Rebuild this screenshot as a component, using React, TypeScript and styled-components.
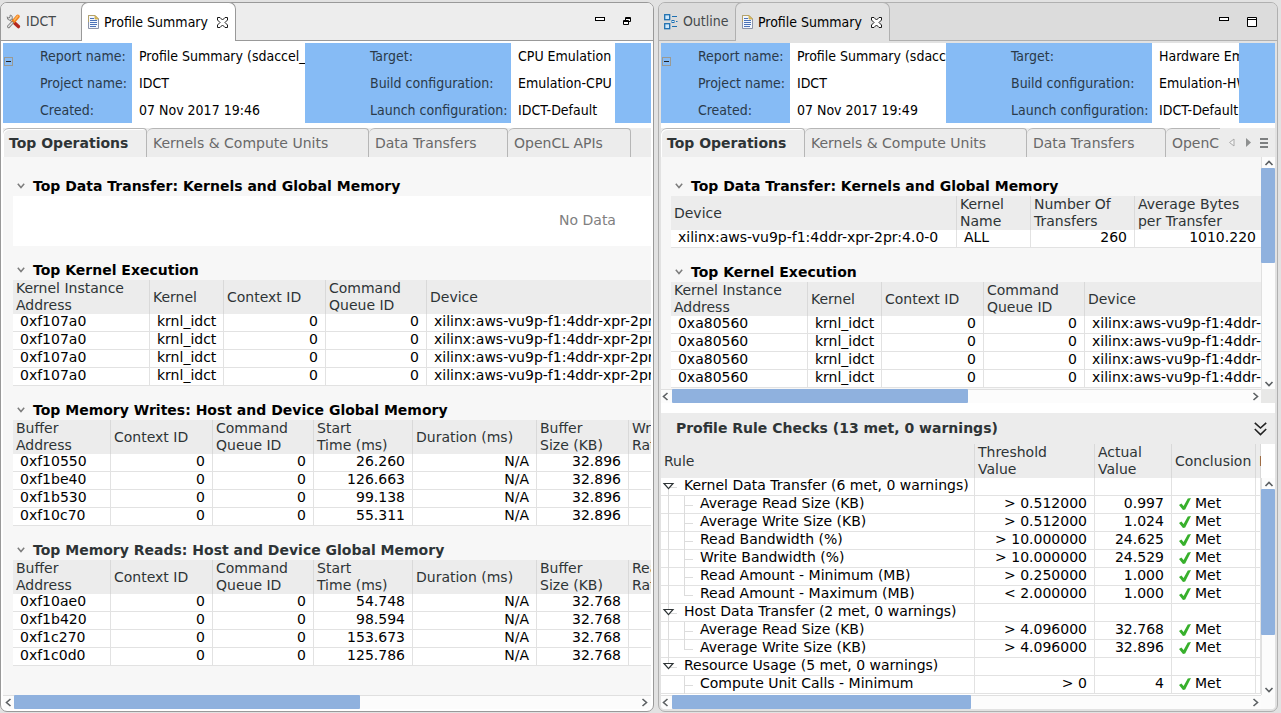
import React from "react";
import styled, { createGlobalStyle, css } from "styled-components";

const GlobalStyle = createGlobalStyle`
  *, *::before, *::after { box-sizing: border-box; }
  body {
    margin: 0;
    background: #e2e2e2;
    color: #000;
    font: 14px/17px "DejaVu Sans", sans-serif;
  }
  button {
    margin: 0;
    padding: 0;
    border: 0;
    background: none;
    color: inherit;
    font: inherit;
    cursor: default;
  }
  h2, dl, dd, dt { margin: 0; font: inherit; }
  svg { display: block; flex: none; }
`;

const uiFont = css`
  font-family: "DejaVu Sans Condensed", "Noto Sans", sans-serif;
`;

/* ---------- frame ---------- */

const Workbench = styled.main`
  display: flex;
  gap: 4px;
  height: 100vh;
  min-height: 560px;
  padding: 2px 3px 1px 0;
`;

const Pane = styled.section<{ $grow: number; $focused?: boolean }>`
  --edge: ${(p) => (p.$focused ? "#999999" : "#b0b0b0")};
  --strip: ${(p) => (p.$focused ? "#ededed" : "#dcdcdc")};
  --body: ${(p) => (p.$focused ? "#ffffff" : "#e2e2e2")};
  flex: ${(p) => p.$grow} 1 0;
  min-width: 0;
  display: flex;
  flex-direction: column;
  border: 1px solid var(--edge);
  border-radius: 7px;
  background: var(--body);
`;

const Strip = styled.header`
  ${uiFont}
  display: flex;
  flex: none;
  height: 38px;
  border-bottom: 1px solid var(--edge);
  border-radius: 6px 6px 0 0;
  background: var(--strip);
`;

const ViewTab = styled.div<{ $active?: boolean; $width: number }>`
  display: flex;
  align-items: center;
  gap: 5px;
  width: ${(p) => p.$width}px;
  padding-left: 5px;
  color: #45494b;
  white-space: nowrap;
  ${(p) =>
    p.$active &&
    css`
      margin: -1px 0;
      padding-left: 6px;
      border: 1px solid var(--edge);
      border-bottom: 0;
      border-radius: 7px 7px 0 0;
      background: var(--body);
      color: #000;
    `}
`;

const CloseTab = styled.button`
  margin: 0 7px 0 auto;
`;

const StripTools = styled.div`
  display: flex;
  gap: 18px;
  margin-left: auto;
  padding: 13px 20px 0 0;
  align-items: flex-start;
`;

const PaneBody = styled.div`
  flex: 1;
  min-height: 0;
  display: flex;
  flex-direction: column;
  margin: 2px;
  overflow: hidden;
  background: #fff;
  border-radius: 0 0 4px 4px;
`;

/* ---------- report details ---------- */

const InfoBar = styled.dl`
  ${uiFont}
  display: flex;
  flex: none;
  height: 80px;
  margin-bottom: 5px;
  line-height: 27px;
  white-space: nowrap;
  overflow: hidden;
`;

const InfoLabels = styled.dt<{ $width: number; $indent: number }>`
  display: flex;
  flex: none;
  width: ${(p) => p.$width}px;
  padding-left: ${(p) => p.$indent}px;
  background: #86bbf5;
  color: #2a3a4a;
`;

const InfoValues = styled.dd<{ $basis: number }>`
  flex: 1 1 ${(p) => p.$basis}px;
  min-width: 0;
  padding-left: 7px;
  overflow: hidden;
`;

const InfoTail = styled.dd`
  flex: none;
  width: 36px;
  background: #86bbf5;
`;

const Collapse = styled.button`
  align-self: flex-start;
  flex: none;
  width: 9px;
  height: 9px;
  margin: 14px 27px 0 0;
  border: 1px solid #9a9a94;
  display: grid;
  place-items: center;
  &::before { content: ""; width: 5px; height: 1px; background: #222; }
`;

/* ---------- page tabs ---------- */

const PageTabs = styled.nav`
  display: flex;
  flex: none;
  height: 29px;
  background: #ececec;
`;

const TabRun = styled.div`
  display: flex;
  flex: 1;
  min-width: 0;
  overflow: hidden;
`;

const PageTab = styled.button<{ $width: number; $active?: boolean }>`
  flex: none;
  width: ${(p) => p.$width}px;
  padding-left: 6px;
  border: solid #b6b6b6;
  border-width: 1px 1px 0 0;
  border-radius: 6px 4px 0 0;
  text-align: left;
  white-space: nowrap;
  color: #696969;
  ${(p) => p.$active && css`color: #2e3436; font-weight: 700; background: #eeeeee; box-shadow: inset 1px 1px 0 #fff;`}
`;

const TabControls = styled.div`
  display: flex;
  flex: none;
  align-items: center;
  gap: 7px;
  width: 55px;
  padding-left: 8px;
`;

/* ---------- sections and tables ---------- */

const Report = styled.div`
  flex: 1;
  min-width: 0;
  padding: 19px 0 1px 10px;
  overflow: hidden;
  background: #f7f7f7;
`;

const Block = styled.section`
  width: 1149px;
  & + & { margin-top: 14px; }
`;

const BlockTitle = styled.h2<{ $soft?: boolean }>`
  display: flex;
  align-items: center;
  gap: 8px;
  padding-left: 4px;
  line-height: 20px;
  font-weight: 700;
  color: ${(p) => (p.$soft ? "#2e3436" : "#000")};
`;

const Empty = styled.div`
  height: 50px;
  line-height: 48px;
  background: #fff;
  text-align: center;
  color: #808080;
`;

const Grid = styled.table`
  width: 100%;
  table-layout: fixed;
  border-collapse: separate;
  border-spacing: 0;
  background: #fff;
`;

const Th = styled.th`
  height: 34px;
  padding: 0 0 0 3px;
  border-right: 1px solid #d9d9d9;
  background: #ececec;
  color: #2e3436;
  font-weight: 400;
  text-align: left;
  white-space: pre;
`;

const Td = styled.td<{ $num?: boolean; $flush?: boolean }>`
  height: 18px;
  padding: ${(p) => (p.$flush ? "0" : "0 7px 2px")};
  border: solid #e2e2e2;
  border-width: 0 1px 1px 0;
  line-height: 15px;
  text-align: ${(p) => (p.$num ? "right" : "left")};
  white-space: nowrap;
`;

interface Column { title: string; width?: number; num?: boolean }

function DataTable({ columns, rows }: { columns: Column[]; rows: string[][] }) {
  return (
    <Grid>
      <colgroup>{columns.map((c) => <col key={c.title} width={c.width} />)}</colgroup>
      <thead>
        <tr>{columns.map((c) => <Th key={c.title} scope="col">{c.title}</Th>)}</tr>
      </thead>
      <tbody>
        {rows.map((r, i) => (
          <tr key={i}>
            {columns.map((c, j) => <Td key={c.title} $num={c.num}>{r[j]}</Td>)}
          </tr>
        ))}
      </tbody>
    </Grid>
  );
}

/* ---------- scrollbars ---------- */

const Bar = styled.div<{ $vertical?: boolean }>`
  display: flex;
  flex: ${(p) => (p.$vertical ? "none" : "1")};
  flex-direction: ${(p) => (p.$vertical ? "column" : "row")};
  ${(p) => (p.$vertical ? "width: 14px; border-left: 1px solid #e0e0e0;" : "height: 14px; border-top: 1px solid #e0e0e0;")}
  background: #fcfcfc;
`;

const Arrow = styled.button<{ $vertical?: boolean }>`
  display: grid;
  place-items: center;
  flex: none;
  ${(p) => (p.$vertical ? "height: 11px;" : "width: 11px;")}
`;

const Track = styled.div<{ $vertical?: boolean }>`
  flex: 1;
  ${(p) => (p.$vertical ? "margin-left: -1px;" : "margin-top: -1px;")}
`;

const Thumb = styled.div<{ $vertical?: boolean; $part: number }>`
  background: #8fb1de;
  border-radius: 1px;
  width: ${(p) => (p.$vertical ? "100%" : p.$part + "%")};
  height: ${(p) => (p.$vertical ? p.$part + "%" : "100%")};
`;

const BarRow = styled.div`
  display: flex;
  flex: none;
  height: 14px;
`;

const Corner = styled.div<{ $shade: string }>`
  flex: none;
  width: 14px;
  background: ${(p) => p.$shade};
`;

const chevrons = {
  up: "M1.5 7L5 3.5L8.5 7",
  down: "M1.5 3L5 6.5L8.5 3",
  left: "M6.5 1L2.5 4.5L6.5 8",
  right: "M2.5 1L6.5 4.5L2.5 8",
};

function Chevron({ to }: { to: keyof typeof chevrons }) {
  return (
    <svg width="10" height="10" viewBox="0 0 10 10" fill="none" stroke="#5c6063" strokeWidth="1.6">
      <path d={chevrons[to]} />
    </svg>
  );
}

function ScrollBar({ vertical, part }: { vertical?: boolean; part: number }) {
  return (
    <Bar $vertical={vertical}>
      <Arrow $vertical={vertical} aria-label={vertical ? "Scroll up" : "Scroll left"}>
        <Chevron to={vertical ? "up" : "left"} />
      </Arrow>
      <Track $vertical={vertical}><Thumb $vertical={vertical} $part={part} /></Track>
      <Arrow $vertical={vertical} aria-label={vertical ? "Scroll down" : "Scroll right"}>
        <Chevron to={vertical ? "down" : "right"} />
      </Arrow>
    </Bar>
  );
}

/* ---------- icons ---------- */

const ToolsIcon = () => (
  <svg width="15" height="15" viewBox="0 0 15 15" fill="none" strokeLinecap="round">
    <path d="M4 4.4L8 8.4" stroke="#6d6d6d" strokeWidth="3.2" />
    <path d="M4 4.4L8 8.4" stroke="#e8e8e8" strokeWidth="1.4" />
    <path d="M1.2 3.2A2.6 2.6 0 1 0 4.2 1L4 3.2L2.8 4Z" fill="#e4e4e4" stroke="#7a7a7a" strokeWidth="0.9" />
    <path d="M8.6 9L12.4 12.6" stroke="#b3261e" strokeWidth="3.4" />
    <path d="M11.8 2.4L7.4 7.6" stroke="#f07f1a" strokeWidth="3.8" />
    <path d="M11.8 2L8.4 6" stroke="#fcb45c" strokeWidth="1.6" />
    <path d="M6.2 8.8L2.6 12.6" stroke="#7a7a7a" strokeWidth="3" />
    <path d="M6.2 8.8L2.6 12.6" stroke="#e4e4e4" strokeWidth="1.4" />
  </svg>
);

const PageIcon = () => (
  <svg width="11" height="14" viewBox="0 0 11 14">
    <path d="M0.5 0.5H7L10.5 4V13.5H0.5Z" fill="#f3f7fd" stroke="#8c93a8" />
    <path d="M0.5 7V0.5H7" fill="none" stroke="#b5a26a" />
    <path d="M7 0.5V4H10.5Z" fill="#e6c65c" stroke="#c2a246" strokeWidth="0.8" />
    <path d="M2 3.5H6M2 5.5H9M2 7.5H9M2 9.5H9M2 11.5H8" stroke="#4b72b8" />
  </svg>
);

const OutlineIcon = () => (
  <svg width="14" height="16" viewBox="0 0 14 16" stroke="#1d6fb0">
    <rect x="0.7" y="0.7" width="5" height="5" fill="#cfe8fb" strokeWidth="1.3" />
    <rect x="0.7" y="9.7" width="5" height="5" fill="#cfe8fb" strokeWidth="1.3" />
    <rect x="8" y="6.5" width="2" height="2" fill="#cfe8fb" />
    <path d="M8 2.5H13M8 12.5H13M12 7.5H13.5" />
  </svg>
);

const CloseIcon = () => (
  <svg width="11" height="11" viewBox="0 0 11 11" fill="#fff" stroke="#1a1a1a">
    <path d="M0.5 0.5H3L5.5 3L8 0.5H10.5V3L8 5.5L10.5 8V10.5H8L5.5 8L3 10.5H0.5V8L3 5.5L0.5 3Z" />
  </svg>
);

const MinimizeIcon = () => (
  <svg width="10" height="11" viewBox="0 0 10 11">
    <rect x="0.5" y="1.5" width="9" height="3" fill="#fff" stroke="#000" />
  </svg>
);

const RestoreIcon = () => (
  <svg width="10" height="11" viewBox="0 0 10 11" fill="#fff" stroke="#000">
    <path d="M2.5 1.5H7.5V5.5H2.5Z M2 2.5H8" />
    <path d="M0.5 4.5H5.5V8.5H0.5Z M0 5.5H6" />
  </svg>
);

const MaximizeIcon = () => (
  <svg width="10" height="11" viewBox="0 0 10 11" fill="#fff" stroke="#000">
    <path d="M0.5 1.5H9.5V10.5H0.5Z M0 3.5H10" />
  </svg>
);

const Twistie = () => (
  <svg width="8" height="6" viewBox="0 0 8 6" fill="none" stroke="#7d7d7d" strokeWidth="1.5">
    <path d="M0.8 0.8L4 4.6L7.2 0.8" />
  </svg>
);

const DoubleChevron = () => (
  <svg width="13" height="14" viewBox="0 0 13 14" fill="none" stroke="#222" strokeWidth="1.6">
    <path d="M0.8 0.8L6.5 6L12.2 0.8M0.8 7L6.5 12.6L12.2 7" />
  </svg>
);

const MetIcon = () => (
  <svg width="12" height="12" viewBox="0 0 12 12">
    <path d="M0 7L2.4 5.4L4.6 8L8.8 0.6L12 0L6.2 11.4L4 12Z" fill="#38b02c" />
  </svg>
);

/* ---------- rule tree ---------- */

const NameCell = styled.div`
  display: flex;
  align-items: flex-start;
  gap: 3px;
  height: 17px;
`;

const MetCell = styled.div`
  display: flex;
  align-items: flex-start;
  gap: 4px;
  height: 17px;
  padding: 2px 0 0 7px;
  line-height: 11px;
`;

const RuleHead = styled.header`
  display: flex;
  flex: none;
  align-items: center;
  justify-content: space-between;
  height: 31px;
  padding: 0 8px 0 15px;
  background: #ececec;
  color: #2e3436;
`;

const RuleTitle = styled.h2`
  font-weight: 700;
`;

const Row = styled.div<{ $fill?: boolean }>`
  display: flex;
  flex: ${(p) => (p.$fill ? "1" : "none")};
  min-height: 0;
`;

const RuleTableBox = styled.div`
  flex: 1;
  min-width: 0;
  overflow: hidden;
`;

const RuleSide = styled.div`
  display: flex;
  flex: none;
  padding-top: 34px;
`;

const Gap = styled.div`
  flex: none;
  height: 10px;
`;

const Lower = styled.section`
  flex: 1;
  min-height: 0;
  display: flex;
  flex-direction: column;
`;

interface Rule { name: string; limit: string; actual: string }
interface RuleGroup { name: string; rules: Rule[] }

const guide = "#dcdcdc";

function GroupToggle({ first, last }: { first: boolean; last: boolean }) {
  return (
    <svg width="20" height="18" viewBox="0 0 20 18" fill="none">
      <path d={`M7.5 ${first ? 9 : 0}V${last ? 9 : 18}M8 9.5H16`} stroke={guide} />
      <path d="M3 5.5H12L7.5 10.6Z" fill="#fff" stroke="#2e3436" strokeWidth="1.2" />
    </svg>
  );
}

function Branch({ outer, last }: { outer: boolean; last: boolean }) {
  return (
    <svg width="36" height="18" viewBox="0 0 36 18" fill="none" stroke={guide}>
      {outer && <path d="M7.5 0V18" />}
      <path d={`M23.5 0V${last ? 10 : 18}M24 9.5H32`} />
    </svg>
  );
}

const ruleGroups: RuleGroup[] = [
  {
    name: "Kernel Data Transfer (6 met, 0 warnings)",
    rules: [
      { name: "Average Read Size (KB)", limit: "> 0.512000", actual: "0.997" },
      { name: "Average Write Size (KB)", limit: "> 0.512000", actual: "1.024" },
      { name: "Read Bandwidth (%)", limit: "> 10.000000", actual: "24.625" },
      { name: "Write Bandwidth (%)", limit: "> 10.000000", actual: "24.529" },
      { name: "Read Amount - Minimum (MB)", limit: "> 0.250000", actual: "1.000" },
      { name: "Read Amount - Maximum (MB)", limit: "< 2.000000", actual: "1.000" },
    ],
  },
  {
    name: "Host Data Transfer (2 met, 0 warnings)",
    rules: [
      { name: "Average Read Size (KB)", limit: "> 4.096000", actual: "32.768" },
      { name: "Average Write Size (KB)", limit: "> 4.096000", actual: "32.896" },
    ],
  },
  {
    name: "Resource Usage (5 met, 0 warnings)",
    rules: [{ name: "Compute Unit Calls - Minimum", limit: "> 0", actual: "4" }],
  },
];

function RuleTable() {
  return (
    <Grid>
      <colgroup>
        <col width={314} /><col width={120} /><col width={77} /><col width={84} /><col />
      </colgroup>
      <thead>
        <tr>
          {["Rule", "Threshold\nValue", "Actual\nValue", "Conclusion", "Details"].map((t) => (
            <Th key={t} scope="col">{t}</Th>
          ))}
        </tr>
      </thead>
      {ruleGroups.map((g, gi) => {
        const lastGroup = gi === ruleGroups.length - 1;
        return (
          <tbody key={g.name}>
            <tr>
              <Td $flush>
                <NameCell><GroupToggle first={gi === 0} last={lastGroup} />{g.name}</NameCell>
              </Td>
              <Td /><Td /><Td /><Td />
            </tr>
            {g.rules.map((r, ri) => (
              <tr key={r.name}>
                <Td $flush>
                  <NameCell>
                    <Branch outer={!lastGroup} last={!lastGroup && ri === g.rules.length - 1} />{r.name}
                  </NameCell>
                </Td>
                <Td $num>{r.limit}</Td>
                <Td $num>{r.actual}</Td>
                <Td $flush><MetCell><MetIcon />Met</MetCell></Td>
                <Td />
              </tr>
            ))}
          </tbody>
        );
      })}
    </Grid>
  );
}

/* ---------- report data ---------- */

const kernelColumns: Column[] = [
  { title: "Kernel Instance\nAddress", width: 137 },
  { title: "Kernel", width: 74 },
  { title: "Context ID", width: 102, num: true },
  { title: "Command\nQueue ID", width: 101, num: true },
  { title: "Device" },
];

const kernelRows = (address: string) =>
  Array.from({ length: 4 }, () => [address, "krnl_idct", "0", "0", "xilinx:aws-vu9p-f1:4ddr-xpr-2pr:4.0-0"]);

const bufferColumns = (rate: string): Column[] => [
  { title: "Buffer\nAddress", width: 98 },
  { title: "Context ID", width: 102, num: true },
  { title: "Command\nQueue ID", width: 101, num: true },
  { title: "Start\nTime (ms)", width: 99, num: true },
  { title: "Duration (ms)", width: 124, num: true },
  { title: "Buffer\nSize (KB)", width: 92, num: true },
  { title: rate, num: true },
];

const bufferRows = (entries: [string, string][], size: string) =>
  entries.map(([address, start]) => [address, "0", "0", start, "N/A", size, ""]);

const transferColumns: Column[] = [
  { title: "Device", width: 286 },
  { title: "Kernel\nName", width: 74 },
  { title: "Number Of\nTransfers", width: 104, num: true },
  { title: "Average Bytes\nper Transfer", width: 129, num: true },
  { title: "" },
];

function Title({ children, soft }: { children: string; soft?: boolean }) {
  return <BlockTitle $soft={soft}><Twistie />{children}</BlockTitle>;
}

function Info({ created, target, build }: { created: string; target: string; build: string }) {
  return (
    <InfoBar>
      <InfoLabels $width={129} $indent={1}>
        <Collapse aria-label="Collapse details" />
        <div><div>Report name:</div><div>Project name:</div><div>Created:</div></div>
      </InfoLabels>
      <InfoValues $basis={76}>
        <div>Profile Summary (sdaccel_</div><div>IDCT</div><div>{created}</div>
      </InfoValues>
      <InfoLabels $width={206} $indent={65}>
        <div><div>Target:</div><div>Build configuration:</div><div>Launch configuration:</div></div>
      </InfoLabels>
      <InfoValues $basis={7}>
        <div>{target}</div><div>{build}</div><div>IDCT-Default</div>
      </InfoValues>
      <InfoTail />
    </InfoBar>
  );
}

function Tabs({ controls }: { controls?: boolean }) {
  return (
    <PageTabs>
      <TabRun>
        <PageTab $width={144} $active>Top Operations</PageTab>
        <PageTab $width={222}>Kernels &amp; Compute Units</PageTab>
        <PageTab $width={139}>Data Transfers</PageTab>
        <PageTab $width={123}>OpenCL APIs</PageTab>
      </TabRun>
      {controls && (
        <TabControls>
          <button aria-label="Previous tab">
            <svg width="8" height="9" viewBox="0 0 8 9"><path d="M6 1V8L1.5 4.5Z" fill="#f4f4f4" stroke="#a8a8a8" /></svg>
          </button>
          <button aria-label="Next tab">
            <svg width="10" height="9" viewBox="0 0 10 9"><path d="M3 0V9L8 4.5Z" fill="#8e9090" /></svg>
          </button>
          <button aria-label="All tabs">
            <svg width="9" height="10" viewBox="0 0 9 10"><path d="M0 1H8M0 5H8M0 9H8" stroke="#7d7f80" strokeWidth="2" /></svg>
          </button>
        </TabControls>
      )}
    </PageTabs>
  );
}

function SummaryTab() {
  return (
    <ViewTab $active $width={155}>
      <PageIcon />Profile Summary
      <CloseTab aria-label="Close Profile Summary"><CloseIcon /></CloseTab>
    </ViewTab>
  );
}

export default function App() {
  return (
    <>
      <GlobalStyle />
      <Workbench>
        <Pane $grow={654} $focused>
          <Strip>
            <ViewTab $width={80}><ToolsIcon />IDCT</ViewTab>
            <SummaryTab />
            <StripTools>
              <button aria-label="Minimize"><MinimizeIcon /></button>
              <button aria-label="Restore"><RestoreIcon /></button>
            </StripTools>
          </Strip>
          <PaneBody>
            <Info created="07 Nov 2017 19:46" target="CPU Emulation" build="Emulation-CPU" />
            <Tabs />
            <Report>
              <Block>
                <Title>Top Data Transfer: Kernels and Global Memory</Title>
                <Empty>No Data</Empty>
              </Block>
              <Block>
                <Title>Top Kernel Execution</Title>
                <DataTable columns={kernelColumns} rows={kernelRows("0xf107a0")} />
              </Block>
              <Block>
                <Title>Top Memory Writes: Host and Device Global Memory</Title>
                <DataTable
                  columns={bufferColumns("Writing\nRate (MB/s)")}
                  rows={bufferRows(
                    [["0xf10550", "26.260"], ["0xf1be40", "126.663"], ["0xf1b530", "99.138"], ["0xf10c70", "55.311"]],
                    "32.896",
                  )}
                />
              </Block>
              <Block>
                <Title soft>Top Memory Reads: Host and Device Global Memory</Title>
                <DataTable
                  columns={bufferColumns("Reading\nRate (MB/s)")}
                  rows={bufferRows(
                    [["0xf10ae0", "54.748"], ["0xf1b420", "98.594"], ["0xf1c270", "153.673"], ["0xf1c0d0", "125.786"]],
                    "32.768",
                  )}
                />
              </Block>
            </Report>
            <BarRow><ScrollBar part={55.3} /></BarRow>
          </PaneBody>
        </Pane>

        <Pane $grow={620}>
          <Strip>
            <ViewTab $width={76}><OutlineIcon />Outline</ViewTab>
            <SummaryTab />
            <StripTools>
              <button aria-label="Minimize"><MinimizeIcon /></button>
              <button aria-label="Maximize"><MaximizeIcon /></button>
            </StripTools>
          </Strip>
          <PaneBody>
            <Info created="07 Nov 2017 19:49" target="Hardware Emulation" build="Emulation-HW" />
            <Tabs controls />
            <Row>
              <Report>
                <Block>
                  <Title>Top Data Transfer: Kernels and Global Memory</Title>
                  <DataTable
                    columns={transferColumns}
                    rows={[["xilinx:aws-vu9p-f1:4ddr-xpr-2pr:4.0-0", "ALL", "260", "1010.220", ""]]}
                  />
                </Block>
                <Block>
                  <Title>Top Kernel Execution</Title>
                  <DataTable columns={kernelColumns} rows={kernelRows("0xa80560")} />
                </Block>
              </Report>
              <ScrollBar vertical part={45} />
            </Row>
            <BarRow><ScrollBar part={51.3} /><Corner $shade="#e8e8e7" /></BarRow>
            <Gap />
            <Lower>
              <RuleHead>
                <RuleTitle>Profile Rule Checks (13 met, 0 warnings)</RuleTitle>
                <button aria-label="Collapse rule checks"><DoubleChevron /></button>
              </RuleHead>
              <Row $fill>
                <RuleTableBox><RuleTable /></RuleTableBox>
                <RuleSide><ScrollBar vertical part={75} /></RuleSide>
              </Row>
              <BarRow><ScrollBar part={51.7} /><Corner $shade="#fbfbfb" /></BarRow>
            </Lower>
          </PaneBody>
        </Pane>
      </Workbench>
    </>
  );
}
